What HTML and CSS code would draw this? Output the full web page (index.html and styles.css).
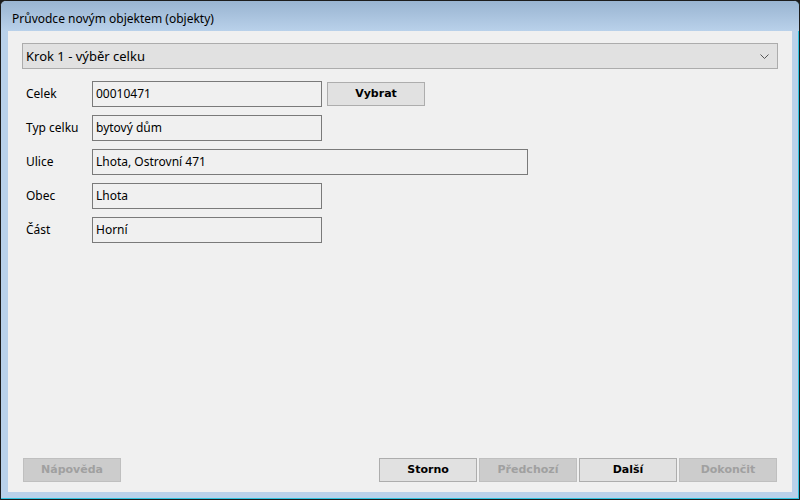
FILE: index.html
```html
<!DOCTYPE html>
<html lang="cs">
<head>
    <meta charset="UTF-8">
    <title>Průvodce novým objektem (objekty)</title>
    <link rel="stylesheet" href="styles.css">
</head>
<body>
    <div class="window">
        <div class="title_bar">Průvodce novým objektem (objekty)</div>
        <div class="client">
            <div class="step_select">
                <span>Krok 1 - výběr celku</span>
                <svg class="chevron" width="9" height="5" viewBox="0 0 9 5">
                    <path d="M0.5 0.5 L4.5 4.5 L8.5 0.5" fill="none" stroke="#555" stroke-width="1"/>
                </svg>
            </div>

            <div class="form">
                <div class="form_row">
                    <label>Celek</label>
                    <div class="field">00010471</div>
                    <a href="javascript:void(0)" class="btn btn_pick">Vybrat</a>
                </div>
                <div class="form_row">
                    <label>Typ celku</label>
                    <div class="field">bytový dům</div>
                </div>
                <div class="form_row">
                    <label>Ulice</label>
                    <div class="field wide">Lhota, Ostrovní 471</div>
                </div>
                <div class="form_row">
                    <label>Obec</label>
                    <div class="field">Lhota</div>
                </div>
                <div class="form_row">
                    <label>Část</label>
                    <div class="field">Horní</div>
                </div>
            </div>

            <div class="btn_bar">
                <a href="javascript:void(0)" class="btn disabled">Nápověda</a>
                <div class="btn_group">
                    <a href="javascript:void(0)" class="btn">Storno</a>
                    <a href="javascript:void(0)" class="btn disabled">Předchozí</a>
                    <a href="javascript:void(0)" class="btn">Další</a>
                    <a href="javascript:void(0)" class="btn disabled">Dokončit</a>
                </div>
            </div>
        </div>
    </div>
</body>
</html>
```

FILE: styles.css
```css
html, body {
    margin: 0;
    padding: 0;
    background-color: #1b1b1b;
}

body {
    font-family: "Noto Sans", "Open Sans", sans-serif;
    font-size: 12px;
    color: #000;
}

.window {
    width: 800px;
    height: 500px;
    box-sizing: border-box;
    border: 1px solid #1c1c1c;
    border-radius: 6px 6px 0 0;
    background-color: #b9d1ea;
    box-shadow: inset -1px -1px 0 #2fc3df;
    display: flex;
    flex-direction: column;
    overflow: hidden;
}

.title_bar {
    height: 30px;
    flex: none;
    padding-left: 11px;
    line-height: 36px;
    background: linear-gradient(to bottom, #99b4d1, #b9d1ea);
    white-space: nowrap;
}

.client {
    flex: 1;
    margin: 0 7px 7px 7px;
    padding: 12px 14px 10px;
    background-color: #f0f0f0;
    display: flex;
    flex-direction: column;
}

.step_select {
    height: 26px;
    box-sizing: border-box;
    border: 1px solid #acacac;
    background-color: #e1e1e1;
    display: flex;
    align-items: center;
    justify-content: space-between;
    padding: 0 8px 0 3px;
    font-size: 13px;
}

.chevron {
    display: block;
}

.form {
    margin-top: 12px;
    display: flex;
    flex-direction: column;
    gap: 8px;
}

.form_row {
    display: flex;
    align-items: flex-start;
}

.form_row label {
    width: 70px;
    padding-left: 4px;
    box-sizing: border-box;
    line-height: 26px;
}

.field {
    width: 230px;
    height: 26px;
    box-sizing: border-box;
    border: 1px solid #7a7a7a;
    background-color: #f0f0f0;
    padding-left: 3px;
    line-height: 24px;
}

.field.wide {
    width: 436px;
}

.btn {
    display: block;
    width: 98px;
    height: 24px;
    box-sizing: border-box;
    border: 1px solid #adadad;
    background-color: #e1e1e1;
    color: #000;
    text-decoration: none;
    text-align: center;
    line-height: 22px;
    font-family: "DejaVu Sans", sans-serif;
    font-weight: bold;
    font-size: 11px;
}

.btn.disabled {
    background-color: #cccccc;
    border-color: #bfbfbf;
    color: #a0a0a0;
}

.btn_pick {
    margin: 1px 0 0 5px;
}

.btn_bar {
    margin-top: auto;
    display: flex;
    justify-content: space-between;
    padding: 0 1px;
}

.btn_group {
    display: flex;
    gap: 2px;
}
```
